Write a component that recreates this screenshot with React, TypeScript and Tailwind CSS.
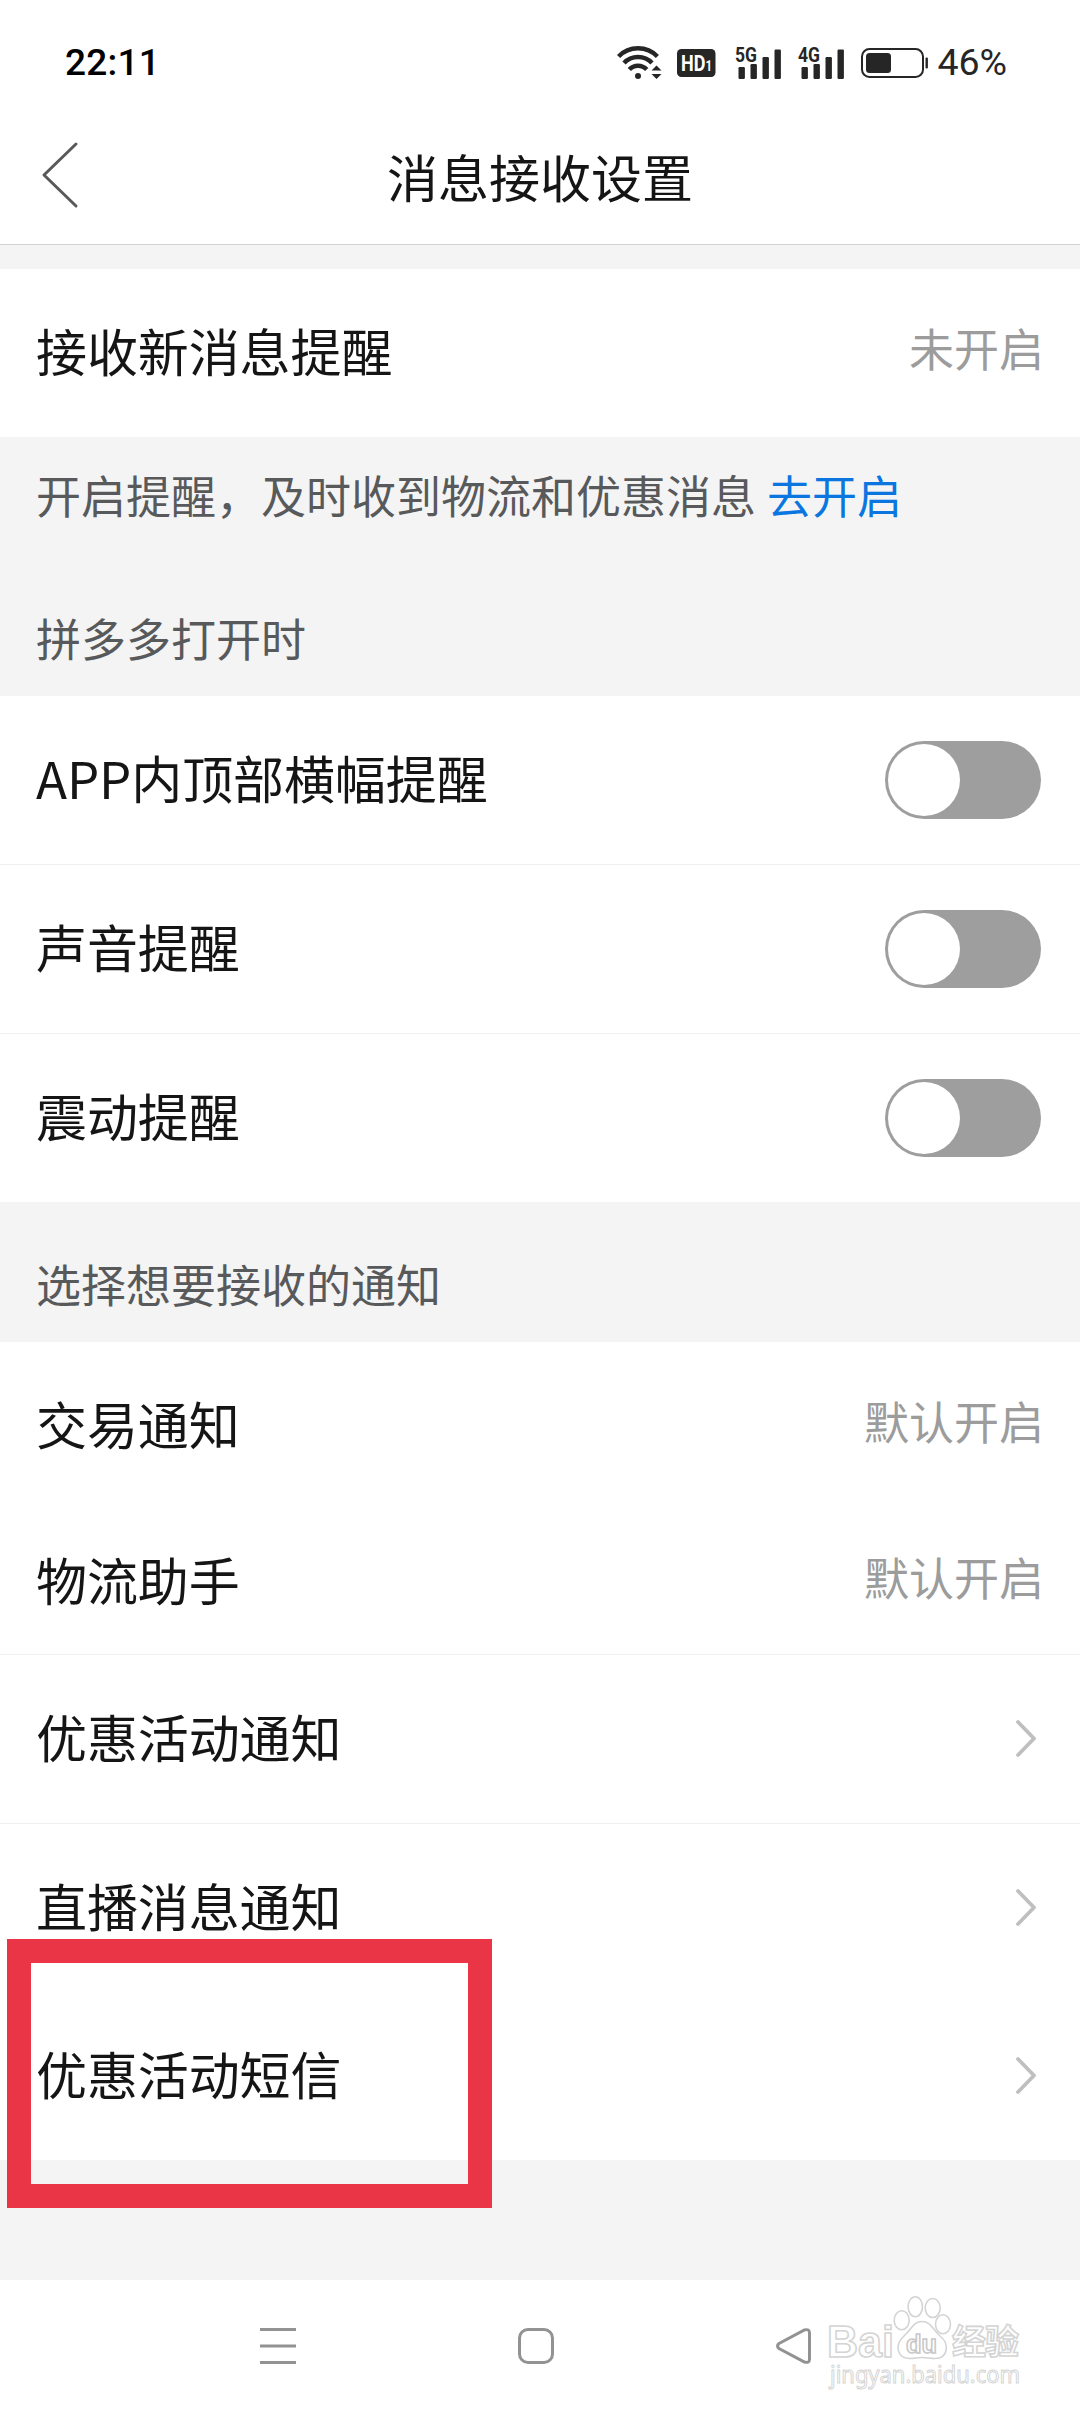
import { ReactNode } from 'react';

const Chevron = () => (
  <svg width="24" height="40" viewBox="0 0 24 40" fill="none" className="mr-[6px]">
    <path
      d="M4 3 L20 19.500 L4 36"
      stroke="#bfbfbf"
      strokeWidth="3.8"
      strokeLinecap="round"
      strokeLinejoin="round"
    />
  </svg>
);

const Switch = () => (
  <button
    type="button"
    role="switch"
    aria-checked="false"
    className="mr-[3px] flex h-[78px] w-[156px] items-center rounded-full bg-[#9e9e9e] px-[3px]"
  >
    <span className="size-[72px] rounded-full bg-white" />
  </button>
);

const Value = ({ children }: { children: ReactNode }) => (
  <span className="pb-[12px] text-[45px] leading-none text-[#9c9c9c]">
    {children}
  </span>
);

interface RowProps {
  label: string;
  compact?: boolean;
  divider?: boolean;
  children: ReactNode;
}

const Row = ({ label, compact, divider, children }: RowProps) => (
  <div
    className={`flex items-center justify-between bg-white px-9 ${
      compact ? 'h-[156px] pt-[12px]' : divider ? 'h-[169px]' : 'h-[168px]'
    } ${divider ? 'border-t border-[#f0f0f0]' : ''}`}
  >
    <span className="pb-[6px] text-[51px] leading-none tracking-[-0.1px] text-[#151516]">
      {label}
    </span>
    {children}
  </div>
);

const Signal = ({ type }: { type: string }) => (
  <svg width="48" height="36" viewBox="0 0 48 36" fill="#262626" className="overflow-visible">
    <text
      x="0"
      y="16.500"
      fontSize="21"
      fontWeight="700"
      textLength="22"
      lengthAdjust="spacingAndGlyphs"
      className="font-['Roboto',sans-serif]"
    >
      {type}
    </text>
    <rect x="3.5" y="22" width="6.4" height="12" rx="1.2" />
    <rect x="15.500" y="19" width="6.4" height="15" rx="1.2" />
    <rect x="27.500" y="12" width="6.4" height="22" rx="1.2" />
    <rect x="39.500" y="4.500" width="6.4" height="29.500" rx="1.2" />
  </svg>
);

const StatusBar = () => (
  <div className="flex h-[108px] items-center justify-between pt-[17px] pr-[73px] pl-[65px] font-['Roboto',sans-serif]">
    <span className="text-[37px] font-medium tracking-[0.2px] text-black">
      22:11
    </span>
    <div className="flex items-center text-[#262626]">
      <svg width="46" height="36" viewBox="0 0 46 36" fill="none">
        <g stroke="#262626" strokeWidth="4.4">
          <path d="M1.6 11.5 C12 0.5 30 0.5 40.4 11.5" />
          <path d="M7 18 C14.5 10 27.5 10 35 18" />
          <path d="M12.3 24.6 C17 19.4 25 19.4 29.7 24.6" />
        </g>
        <circle cx="21" cy="31" r="3" fill="#262626" />
        <path d="M34.5 25.5 L39.5 20.5 L44.5 25.5 Z" fill="#262626" />
        <path d="M34.5 29 L39.5 34 L44.5 29 Z" fill="#262626" />
      </svg>
      <svg width="39" height="28" viewBox="0 0 39 28" className="ml-[14px] overflow-visible">
        <rect width="38.5" height="28" rx="4.5" fill="#262626" />
        <text
          x="4"
          y="22"
          fontSize="22"
          fontWeight="700"
          fill="#fff"
          textLength="31"
          lengthAdjust="spacingAndGlyphs"
          className="font-['Roboto',sans-serif]"
        >
          HD<tspan fontSize="14">1</tspan>
        </text>
      </svg>
      <div className="ml-[19px] flex gap-[15px]">
        <Signal type="5G" />
        <Signal type="4G" />
      </div>
      <svg width="68" height="30" viewBox="0 0 68 30" className="ml-[15px]">
        <rect x="1" y="1" width="61" height="28" rx="7.5" fill="none" stroke="#262626" strokeWidth="2" />
        <rect x="5" y="5" width="25" height="20" rx="3.5" fill="#262626" />
        <rect x="64.5" y="9.5" width="2.4" height="11" rx="1" fill="#262626" />
      </svg>
      <span className="ml-[8px] text-[37.5px]">46%</span>
    </div>
  </div>
);

const Watermark = () => (
  <svg
    width="200"
    height="104"
    viewBox="0 0 200 104"
    fill="#fff"
    stroke="#d4d4d4"
    strokeWidth="1.6"
    className="absolute top-[12px] left-[824px] overflow-visible"
  >
    <g fontWeight="700">
      <text
        x="3"
        y="65"
        fontSize="44"
        textLength="67"
        lengthAdjust="spacingAndGlyphs"
        className="font-['Liberation_Sans',sans-serif]"
      >
        Bai
      </text>
      <text
        x="128"
        y="62"
        fontSize="34"
        textLength="67"
        className="font-['Noto_Sans_CJK_SC',sans-serif]"
      >
        经验
      </text>
    </g>
    <text
      x="6"
      y="91"
      fontSize="24"
      strokeWidth="1"
      textLength="190"
      lengthAdjust="spacingAndGlyphs"
      className="font-['Noto_Sans',sans-serif]"
    >
      jingyan.baidu.com
    </text>
    <ellipse cx="77.700" cy="28.300" rx="7.500" ry="9.500" />
    <ellipse cx="91.300" cy="14.700" rx="7.200" ry="10" />
    <ellipse cx="108.700" cy="16" rx="7.500" ry="9.500" />
    <ellipse cx="119" cy="32.300" rx="7.500" ry="9.500" />
    <path d="M98 29.500 C107 29.500 108 37 116 44 C126 52 124 66.500 111 66.500 C106 66.500 103 65.500 98 65.500 C93 65.500 91 66.500 86 66.500 C73 66.500 70 53 80 44 C88 37 89 29.500 98 29.500 Z" />
    <text
      x="82"
      y="61"
      fontSize="26"
      stroke="#c8c8c8"
      textLength="31"
      lengthAdjust="spacingAndGlyphs"
      className="font-['Liberation_Sans',sans-serif] font-bold"
    >
      du
    </text>
  </svg>
);

const NavBar = () => (
  <nav className="relative h-[132px] bg-white pt-[48px]">
    <svg width="1080" height="38" viewBox="0 0 1080 38" fill="none" stroke="#929292" strokeWidth="3">
      <path d="M260 1.500 H296 M260 18 H296 M260 34.500 H296" />
      <rect x="519.500" y="1.500" width="33" height="33" rx="8.500" />
      <path d="M779 15.500 L804.500 2 Q809.500 0.500 809.500 5 V31 Q809.500 35.500 804.500 34 L779 20.500 Q776 18 779 15.500 Z" />
    </svg>
    <Watermark />
  </nav>
);

const App = () => {
  return (
    <div className="relative flex h-[2412px] w-[1080px] flex-col overflow-hidden bg-[#f4f4f4] font-['Noto_Sans_CJK_SC',sans-serif]">
      <header className="h-[245px] shrink-0 border-b border-[#d0d0d0] bg-white">
        <StatusBar />
        <div className="flex h-[136px] items-center pl-[40px]">
          <svg width="40" height="70" viewBox="0 0 40 70" fill="none">
            <path
              d="M36 3 L4 34 L36 65"
              stroke="#58595b"
              strokeWidth="3"
              strokeLinecap="round"
              strokeLinejoin="round"
            />
          </svg>
          <h1 className="flex-1 pr-20 text-center text-[51px] leading-none text-[#151516]">
            消息接收设置
          </h1>
        </div>
      </header>

      <main className="flex-1 pt-[24px]">
        <Row label="接收新消息提醒">
          <Value>未开启</Value>
        </Row>

        <div className="flex h-[259px] flex-col justify-between px-9 pt-[35px] pb-[36px] text-[45px] leading-none text-[#58595b]">
          <p>
            开启提醒，及时收到物流和优惠消息
            <a href="#" className="ml-[11px] text-[#0b76e0]">
              去开启
            </a>
          </p>
          <h2>拼多多打开时</h2>
        </div>

        <Row label="APP内顶部横幅提醒">
          <Switch />
        </Row>
        <Row label="声音提醒" divider>
          <Switch />
        </Row>
        <Row label="震动提醒" divider>
          <Switch />
        </Row>

        <h2 className="flex h-[140px] items-end px-9 pb-[36px] text-[45px] leading-none text-[#58595b]">
          选择想要接收的通知
        </h2>

        <Row label="交易通知" compact>
          <Value>默认开启</Value>
        </Row>
        <Row label="物流助手" compact>
          <Value>默认开启</Value>
        </Row>
        <Row label="优惠活动通知" divider>
          <Chevron />
        </Row>
        <Row label="直播消息通知" divider>
          <Chevron />
        </Row>
        <Row label="优惠活动短信">
          <Chevron />
        </Row>
      </main>

      <NavBar />

      {/* highlight around the last row */}
      <div className="absolute top-[1939px] left-[7px] h-[269px] w-[485px] border-[24.5px] border-[#ea3546]" />
    </div>
  );
};

export default App;
